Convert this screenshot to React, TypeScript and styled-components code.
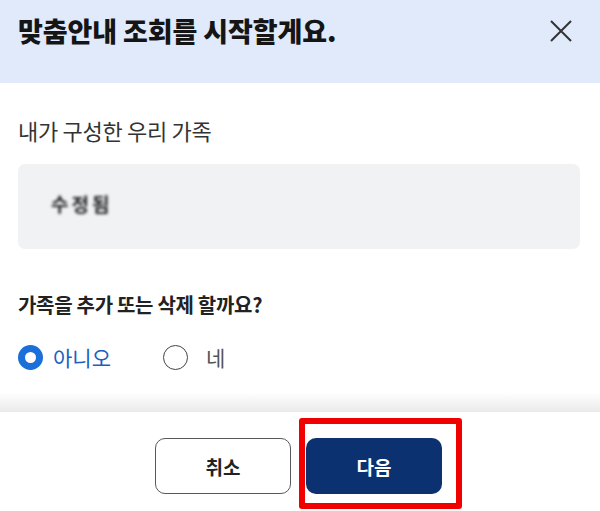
import React, { useState } from "react";
import styled, { createGlobalStyle } from "styled-components";

const GlobalStyle = createGlobalStyle`
  html, body {
    margin: 0;
    padding: 0;
    background: #fff;
  }
  body {
    font-family: "Noto Sans CJK KR", "Noto Sans", sans-serif;
  }
  * { box-sizing: border-box; }
`;

const Sheet = styled.div`
  width: 600px;
  height: 511px;
  display: flex;
  flex-direction: column;
  background: #fff;
  overflow: hidden;
`;

const Header = styled.header`
  height: 83px;
  flex-shrink: 0;
  background: #e0eafb;
  display: flex;
  align-items: flex-start;
  justify-content: space-between;
  padding: 12px 24px 0 18px;
`;

const Title = styled.h1`
  margin: 0;
  font-size: 27px;
  line-height: 38px;
  font-weight: 800;
  color: #151515;
  letter-spacing: -0.1px;
`;

const CloseButton = styled.button`
  width: 38px;
  height: 38px;
  border: none;
  background: transparent;
  padding: 0;
  display: flex;
  align-items: center;
  justify-content: center;
  cursor: pointer;
  margin-right: -4px;
`;

const Body = styled.main`
  flex: 1;
  padding: 33px 20px 0 18px;
  background: linear-gradient(to bottom, #fff calc(100% - 20px), #eaeaea 100%);
`;

const Label = styled.div`
  font-size: 22px;
  line-height: 28px;
  color: #333;
  letter-spacing: -0.3px;
`;

const FamilyBox = styled.div`
  margin-top: 20px;
  height: 85px;
  border-radius: 7px;
  background: #f1f2f4;
  display: flex;
  align-items: center;
  padding: 0 0 6px 33px;
`;

const MaskedName = styled.span`
  font-size: 19px;
  font-weight: 700;
  color: #222;
  letter-spacing: 3px;
  filter: blur(1.4px);
`;

const Question = styled.div`
  margin-top: 43px;
  font-size: 20px;
  line-height: 26px;
  font-weight: 700;
  color: #222;
  letter-spacing: -0.3px;
`;

const RadioRow = styled.div`
  margin-top: 26px;
  display: flex;
  align-items: center;
  gap: 52px;
`;

const RadioOption = styled.label<{ wide?: boolean }>`
  display: flex;
  align-items: center;
  gap: ${p => (p.wide ? "18px" : "10px")};
  cursor: pointer;
`;

const RadioCircle = styled.span<{ checked: boolean }>`
  width: 25px;
  height: 25px;
  border-radius: 50%;
  background: #fff;
  border: ${p => (p.checked ? "7px solid #1a6fd9" : "1.5px solid #444")};
  flex-shrink: 0;
`;

const RadioText = styled.span<{ checked: boolean }>`
  font-size: 21px;
  line-height: 26px;
  color: ${p => (p.checked ? "#1c5fbf" : "#555")};
`;

const Footer = styled.footer`
  height: 99px;
  flex-shrink: 0;
  display: flex;
  justify-content: center;
  align-items: flex-start;
  padding: 26px 3px 0 0;
  gap: 15px;
`;

const ActionButton = styled.button<{ primary?: boolean }>`
  width: 136px;
  height: 56px;
  border-radius: 10px;
  font-family: "Noto Sans CJK KR", sans-serif;
  font-size: 19px;
  font-weight: 700;
  cursor: pointer;
  border: ${p => (p.primary ? "none" : "1px solid #595959")};
  background: ${p => (p.primary ? "#0c3170" : "#fff")};
  color: ${p => (p.primary ? "#fff" : "#222")};
`;

const Highlight = styled.div`
  position: relative;
`;

const RedFrame = styled.div`
  position: absolute;
  left: -7px;
  top: -20px;
  right: -20px;
  bottom: -15px;
  border: 6px solid #f00000;
  border-radius: 3px;
  pointer-events: none;
`;

export default function App() {
  const [answer, setAnswer] = useState<"no" | "yes">("no");

  return (
    <>
      <GlobalStyle />
      <Sheet>
        <Header>
          <Title>맞춤안내 조회를 시작할게요.</Title>
          <CloseButton aria-label="닫기">
            <svg width="22" height="22" viewBox="0 0 22 22">
              <path d="M1 1 L21 21 M21 1 L1 21" stroke="#333" strokeWidth="2" />
            </svg>
          </CloseButton>
        </Header>
        <Body>
          <Label>내가 구성한 우리 가족</Label>
          <FamilyBox>
            <MaskedName>수정됨</MaskedName>
          </FamilyBox>
          <Question>가족을 추가 또는 삭제 할까요?</Question>
          <RadioRow>
            <RadioOption onClick={() => setAnswer("no")}>
              <RadioCircle checked={answer === "no"} />
              <RadioText checked={answer === "no"}>아니오</RadioText>
            </RadioOption>
            <RadioOption wide onClick={() => setAnswer("yes")}>
              <RadioCircle checked={answer === "yes"} />
              <RadioText checked={answer === "yes"}>네</RadioText>
            </RadioOption>
          </RadioRow>
        </Body>
        <Footer>
          <ActionButton>취소</ActionButton>
          <Highlight>
            <ActionButton primary>다음</ActionButton>
            <RedFrame />
          </Highlight>
        </Footer>
      </Sheet>
    </>
  );
}
